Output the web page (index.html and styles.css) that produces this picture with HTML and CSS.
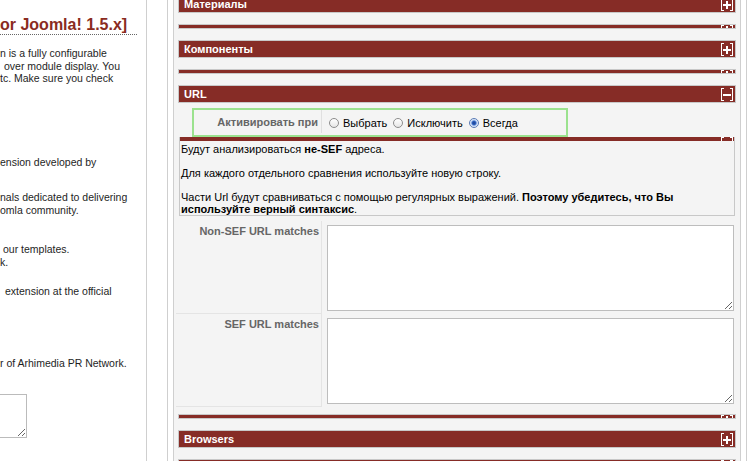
FILE: index.html
```html
<!DOCTYPE html>
<html lang="ru">
<head>
    <meta charset="UTF-8">
    <meta name="viewport" content="width=device-width, initial-scale=1.0">
    <title>Модуль: редактирование</title>
    <link rel="stylesheet" href="styles.css">
</head>
<body>
<div class="page">
    <!-- Описание расширения -->
    <div class="info">
        <h3 class="info-title">or Joomla! 1.5.x]</h3>
        <div class="info-p p1">
            <div>n is a fully configurable</div>
            <div class="ind-4">over module display. You</div>
            <div>tc. Make sure you check</div>
        </div>
        <div class="info-p p2">
            <div>ension developed by</div>
        </div>
        <div class="info-p p3">
            <div>nals dedicated to delivering</div>
            <div>omla community.</div>
        </div>
        <div class="info-p p4">
            <div class="ind-3">our templates.</div>
            <div>k.</div>
        </div>
        <div class="info-p p5">
            <div class="ind-5">extension at the official</div>
        </div>
        <div class="info-p p6">
            <div>r of Arhimedia PR Network.</div>
        </div>
        <textarea class="info-note"></textarea>
    </div>

    <!-- Параметры -->
    <div class="params">
        <div class="pane">
            <div class="toggler first">
                <span>Материалы</span>
                <svg class="tgl" width="12" height="13" viewBox="0 0 12 13"><path fill="#fff" d="M0 0h3v1H1v11h2v1H0zM12 0H9v1h2v11H9v1h3zM5 3h2v3h3v2H7v3H5V8H2V6h3z"/></svg>
            </div>
            <div class="slide-end">
                <svg width="12" height="3" viewBox="0 0 12 3"><path fill="#fff" d="M0 0h3v1H1v2H0zM12 0v3h-1V1H9V0zM5 1h2v2H5z"/></svg>
            </div>

            <div class="toggler">
                <span>Компоненты</span>
                <svg class="tgl" width="12" height="13" viewBox="0 0 12 13"><path fill="#fff" d="M0 0h3v1H1v11h2v1H0zM12 0H9v1h2v11H9v1h3zM5 3h2v3h3v2H7v3H5V8H2V6h3z"/></svg>
            </div>
            <div class="slide-end">
                <svg width="12" height="3" viewBox="0 0 12 3"><path fill="#fff" d="M0 0h3v1H1v2H0zM12 0v3h-1V1H9V0zM5 1h2v2H5z"/></svg>
            </div>

            <div class="toggler">
                <span>URL</span>
                <svg class="tgl" width="12" height="13" viewBox="0 0 12 13"><path fill="#fff" d="M0 0h3v1H1v11h2v1H0zM12 0H9v1h2v11H9v1h3zM2 6h8v2H2z"/></svg>
            </div>
            <div class="slider-body">
                <div class="assign">
                    <div class="assign-label">Активировать при</div>
                    <div class="assign-opts">
                        <label><input type="radio" name="assign_url"> Выбрать</label>
                        <label><input type="radio" name="assign_url"> Исключить</label>
                        <label><input type="radio" name="assign_url" checked> Всегда</label>
                    </div>
                </div>

                <div class="desc">
                    <div class="desc-top">
                        <svg width="12" height="4" viewBox="0 0 12 4"><path fill="#fff" d="M0 0h3v1H1v3H0zM12 0v4h-1V1H9V0z"/></svg>
                    </div>
                    <div class="desc-text">
                        Будут анализироваться <b>не-SEF</b> адреса.<br><br>
                        Для каждого отдельного сравнения используйте новую строку.<br><br>
                        Части Url будут сравниваться с помощью регулярных выражений. <b>Поэтому убедитесь, что Вы</b><br>
                        <b>используйте верный синтаксис</b>.
                    </div>
                </div>

                <div class="param-row first">
                    <div class="param-label">Non-SEF URL matches</div>
                    <div class="param-field"><textarea name="url_regex"></textarea></div>
                </div>
                <div class="param-row">
                    <div class="param-label">SEF URL matches</div>
                    <div class="param-field"><textarea name="url_regex_sef"></textarea></div>
                </div>
            </div>
            <div class="slide-end after-body">
                <svg width="12" height="3" viewBox="0 0 12 3"><path fill="#fff" d="M0 0h3v1H1v2H0zM12 0v3h-1V1H9V0zM5 1h2v2H5z"/></svg>
            </div>

            <div class="toggler">
                <span>Browsers</span>
                <svg class="tgl" width="12" height="13" viewBox="0 0 12 13"><path fill="#fff" d="M0 0h3v1H1v11h2v1H0zM12 0H9v1h2v11H9v1h3zM5 3h2v3h3v2H7v3H5V8H2V6h3z"/></svg>
            </div>
            <div class="slide-end">
                <svg width="12" height="3" viewBox="0 0 12 3"><path fill="#fff" d="M0 0h3v1H1v2H0zM12 0v3h-1V1H9V0zM5 1h2v2H5z"/></svg>
            </div>
        </div>
    </div>
</div>
</body>
</html>
```

FILE: styles.css
```css
* {
    box-sizing: border-box;
}
body {
    margin: 0;
    background-color: #fff;
    font-family: "Liberation Sans", Arial, Helvetica, sans-serif;
    color: #000;
    overflow: hidden;
}
.page {
    display: flex;
    height: 461px;
}

/* левая колонка */
.info {
    width: 147px;
    flex-shrink: 0;
    padding-right: 9px;
    border-right: 1px solid #cfcfcf;
    font-size: 10.5px;
    line-height: 12.5px;
    color: #1e1e1e;
    overflow: hidden;
}
.info-title {
    margin: 15px 0 0;
    font-size: 16px;
    line-height: 19px;
    font-weight: bold;
    color: #8a2b21;
    border-bottom: 1px dotted #666;
    white-space: nowrap;
}
.info-p {
    white-space: nowrap;
}
.p1 { margin-top: 12px; }
.p2 { margin-top: 71px; }
.p3 { margin-top: 23px; }
.p4 { margin-top: 27px; }
.p5 { margin-top: 17px; }
.p6 { margin-top: 59px; }
.ind-3 { padding-left: 3px; }
.ind-4 { padding-left: 4px; }
.ind-5 { padding-left: 5px; }
.info-note {
    display: block;
    width: 107px;
    height: 44px;
    margin: 25px 0 0 -80px;
    border: 1px solid #bbb;
}

/* правая колонка */
.params {
    width: 580px;
    flex-shrink: 0;
    margin-left: 20px;
    padding: 0 5px;
    border-left: 1px solid #cfcfcf;
    border-right: 1px solid #cfcfcf;
}
.pane {
    height: 100%;
    padding: 0 4px;
    background-color: #f4f4f4;
    border-left: 1px solid #cfcfcf;
    border-right: 1px solid #cfcfcf;
    display: flow-root;
    overflow: hidden;
}
.toggler {
    display: flex;
    justify-content: space-between;
    align-items: center;
    height: 18px;
    margin-top: 11px;
    padding: 0 2px 0 5px;
    background-color: #862c26;
    border: 1px solid #c8c8c8;
    color: #fff;
    font-size: 11px;
    font-weight: bold;
}
.toggler.first {
    margin-top: -5px;
}
.tgl {
    display: block;
}
.slide-end {
    display: flex;
    justify-content: flex-end;
    height: 5px;
    margin-top: 11px;
    padding-right: 2px;
    background-color: #862c26;
    border: 1px solid #c8c8c8;
    overflow: hidden;
}
.slide-end svg,
.desc-top svg {
    display: block;
}
.slide-end.after-body {
    margin-top: 7px;
}

/* блок URL */
.assign {
    display: flex;
    width: 376px;
    height: 29px;
    margin: 5px 0 0 14px;
    border: 2px solid #9be28e;
    font-size: 11px;
}
.assign-label {
    display: flex;
    align-items: center;
    justify-content: flex-end;
    width: 128px;
    margin: 0 0 2px;
    padding-right: 3px;
    border-right: 1px solid #e0e0e0;
    font-weight: bold;
    color: #666;
}
.assign-opts {
    display: flex;
    align-items: center;
    padding-left: 1px;
}
.assign-opts label {
    display: flex;
    align-items: center;
}
.assign-opts input {
    appearance: none;
    -webkit-appearance: none;
    width: 10px;
    height: 10px;
    margin: 0 4px 0 6px;
    border: 1px solid #8c8c8c;
    border-radius: 50%;
    background: linear-gradient(#fff, #e6e6e6);
}
.assign-opts input:checked {
    border-color: #5a7bb5;
    background: radial-gradient(circle, #1c3f86 0, #2c5fbf 1.8px, #bcd2f2 3px, #fff 4.5px);
}
.desc {
    margin: 0 1px;
    border: 1px solid #c8c8c8;
    border-top: none;
}
.desc-top {
    display: flex;
    justify-content: flex-end;
    height: 4px;
    padding-right: 1px;
    background-color: #862c26;
}
.desc-text {
    padding: 2px 2px 0 1px;
    font-size: 11px;
    line-height: 12px;
    white-space: nowrap;
}
.param-row {
    display: grid;
    grid-template-columns: 146px 1fr;
    margin-left: -2px;
}
.param-row.first {
    margin-top: 5px;
}
.param-label {
    padding: 4px 2px 0 0;
    border-right: 1px solid #e4e4e4;
    border-bottom: 1px solid #e4e4e4;
    text-align: right;
    font-size: 11px;
    line-height: 13px;
    font-weight: bold;
    color: #666;
}
.param-field {
    padding: 4px 0 3px 5px;
}
.param-field textarea {
    display: block;
    width: 407px;
    height: 86px;
    margin: 0;
    border: 1px solid #bdbdbd;
    background-color: #fff;
}
```
